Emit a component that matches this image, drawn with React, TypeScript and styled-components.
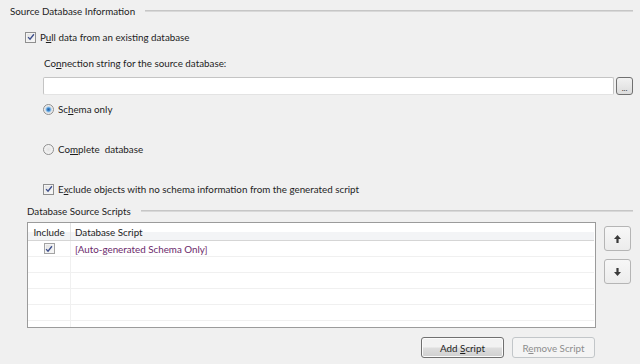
import styled, { createGlobalStyle } from 'styled-components';

const GlobalStyle = createGlobalStyle`
    html, body {
        margin: 0;
        padding: 0;
        background: #f0f0f0;
    }
    body {
        font-family: Lato, "Noto Sans", sans-serif;
        font-size: 9.8px;
        color: #1e1e1e;
    }
`;

const Page = styled.div`
    width: 640px;
    height: 364px;
    box-sizing: border-box;
    padding: 0 7px 0 10px;
    display: flex;
    flex-direction: column;
    overflow: hidden;
`;

const GroupHeader = styled.div<{ indent?: number; top?: number }>`
    height: 22px;
    display: flex;
    align-items: center;
    margin-left: ${(p) => p.indent || 0}px;
    margin-top: ${(p) => p.top || 0}px;
`;

const GroupRule = styled.div`
    flex: 1;
    margin-left: 10px;
    border-top: 1px solid #c6c6c6;
    border-bottom: 1px solid #d8d8d8;
`;

const Row = styled.div<{ indent: number; top: number }>`
    height: 16px;
    display: flex;
    align-items: center;
    gap: 4px;
    margin-left: ${(p) => p.indent}px;
    margin-top: ${(p) => p.top}px;
    white-space: pre;
`;

const Box = styled.span<{ light?: boolean }>`
    width: 9px;
    height: 9px;
    border: 1px solid ${(p) => (p.light ? '#a3a3a3' : '#8f8f8f')};
    background: linear-gradient(135deg, #e0e0e0, #fafafa);
    box-shadow: inset 0 0 0 1px #f4f4f4;
    display: flex;
    align-items: center;
    justify-content: center;
    flex-shrink: 0;
`;

const Radio = styled.span<{ checked?: boolean }>`
    width: 9px;
    height: 9px;
    border-radius: 50%;
    border: 1px solid #8f8f8f;
    background: ${(p) =>
        p.checked
            ? 'radial-gradient(circle, #2c5d9c 0, #3f8ad0 1.5px, #9cc7ec 2.5px, #e6e6e6 3.5px, #f7f7f7 5px)'
            : 'radial-gradient(circle, #e3e3e3 0, #f6f6f6 5px)'};
    flex-shrink: 0;
`;

const U = styled.span`
    text-decoration: underline;
`;

const InputRow = styled.div`
    display: flex;
    gap: 2px;
    margin-left: 33px;
    margin-top: 6px;
    height: 18px;
`;

const TextInput = styled.div`
    flex: 1;
    background: #fff;
    border: 1px solid #c4c4c4;
    border-bottom-color: #e3e3e3;
    border-radius: 2px;
`;

const DotsButton = styled.div`
    width: 15px;
    border: 1px solid #707070;
    border-radius: 3px;
    background: linear-gradient(#f2f2f2, #dcdcdc);
    display: flex;
    align-items: flex-end;
    justify-content: center;
    font-size: 8px;
    line-height: 11px;
    color: #333;
`;

const ScriptsArea = styled.div`
    display: flex;
    margin-left: 17px;
`;

const GridColumn = styled.div`
    width: 569px;
    display: flex;
    flex-direction: column;
`;

const Grid = styled.div`
    height: 106px;
    box-sizing: border-box;
    border: 1px solid #9b9b9b;
    background: #fff;
    overflow: hidden;
`;

const GridRow = styled.div<{ header?: boolean }>`
    display: grid;
    grid-template-columns: 43px 1fr;
    height: ${(p) => (p.header ? 18 : 16)}px;
    box-sizing: border-box;
    border-bottom: 1px solid ${(p) => (p.header ? '#d5d5d5' : '#f0f0f0')};
    margin-right: 1px;
    background: ${(p) => (p.header ? 'linear-gradient(#ffffff 50%, #f3f4f6 50%)' : '#fff')};
`;

const Cell = styled.div<{ center?: boolean; first?: boolean; header?: boolean }>`
    display: flex;
    align-items: center;
    justify-content: ${(p) => (p.center ? 'center' : 'flex-start')};
    padding-left: ${(p) => (p.center ? 0 : 4)}px;
    border-right: ${(p) => (p.first ? `1px solid ${p.header ? '#e3e3e3' : '#f0f0f0'}` : 'none')};
    color: ${(p) => (p.header ? '#1e1e1e' : '#6b2a6b')};
    white-space: nowrap;
`;

const SideButtons = styled.div`
    display: flex;
    flex-direction: column;
    gap: 8px;
    margin-left: 8px;
    margin-top: 4px;
`;

const ArrowButton = styled.div`
    width: 25px;
    height: 23px;
    border: 1px solid #b5b5b5;
    border-radius: 3px;
    background: linear-gradient(#f7f7f7, #ececec);
    display: flex;
    align-items: center;
    justify-content: center;
`;

const ButtonRow = styled.div`
    display: flex;
    justify-content: flex-end;
    gap: 8px;
    margin-top: 9px;
    margin-right: 1px;
`;

const PushButton = styled.div<{ disabled?: boolean }>`
    width: 81px;
    height: 19px;
    border: 1px solid ${(p) => (p.disabled ? '#c2c6c9' : '#707070')};
    border-radius: 3px;
    background: ${(p) => (p.disabled ? '#f4f4f4' : 'linear-gradient(#f2f2f2 45%, #dddddd 55%, #cfcfcf)')};
    color: ${(p) => (p.disabled ? '#8d8d8d' : '#1e1e1e')};
    display: flex;
    align-items: center;
    justify-content: center;
    box-shadow: inset 0 0 0 1px ${(p) => (p.disabled ? '#f4f4f4' : '#fbfbfb')};
`;

const Check = () => (
    <svg width="8" height="8" viewBox="0 0 9 9">
        <path d="M1.2 4.6 L3.4 7 L7.8 1.4" fill="none" stroke="#3d4f8c" strokeWidth="1.5" />
    </svg>
);

const Arrow = ({ down }: { down?: boolean }) => (
    <svg width="7" height="8" viewBox="0 0 7 8" style={{ transform: down ? 'rotate(180deg)' : undefined }}>
        <path d="M3.5 0 L7 4 L4.6 4 L4.6 8 L2.4 8 L2.4 4 L0 4 Z" fill="#3a3a3a" />
    </svg>
);

const emptyRows = [0, 1, 2, 3, 4];

function App() {
    return (
        <>
            <GlobalStyle />
            <Page>
                <GroupHeader>
                    <span>Source Database Information</span>
                    <GroupRule />
                </GroupHeader>
                <Row indent={15} top={7}>
                    <Box><Check /></Box>
                    <span>P<U>u</U>ll data from an existing database</span>
                </Row>
                <Row indent={34} top={10}>
                    <span>Co<U>n</U>nection string for the source database:</span>
                </Row>
                <InputRow>
                    <TextInput />
                    <DotsButton>...</DotsButton>
                </InputRow>
                <Row indent={33} top={6}>
                    <Radio checked />
                    <span>Sc<U>h</U>ema only</span>
                </Row>
                <Row indent={33} top={24}>
                    <Radio />
                    <span>Co<U>m</U>plete  database</span>
                </Row>
                <Row indent={33} top={24}>
                    <Box><Check /></Box>
                    <span>E<U>x</U>clude objects with no schema information from the generated script</span>
                </Row>
                <GroupHeader indent={17} top={3}>
                    <span>Database Source Scripts</span>
                    <GroupRule />
                </GroupHeader>
                <ScriptsArea>
                    <GridColumn>
                        <Grid>
                            <GridRow header>
                                <Cell first header center>Include</Cell>
                                <Cell header>Database Script</Cell>
                            </GridRow>
                            <GridRow>
                                <Cell first center><Box light><Check /></Box></Cell>
                                <Cell>[Auto-generated Schema Only]</Cell>
                            </GridRow>
                            {emptyRows.map((r) => (
                                <GridRow key={r}>
                                    <Cell first />
                                    <Cell />
                                </GridRow>
                            ))}
                        </Grid>
                        <ButtonRow>
                            <PushButton><span>Add <U>S</U>cript</span></PushButton>
                            <PushButton disabled><span>R<U>e</U>move Script</span></PushButton>
                        </ButtonRow>
                    </GridColumn>
                    <SideButtons>
                        <ArrowButton><Arrow /></ArrowButton>
                        <ArrowButton><Arrow down /></ArrowButton>
                    </SideButtons>
                </ScriptsArea>
            </Page>
        </>
    );
}

export default App;
